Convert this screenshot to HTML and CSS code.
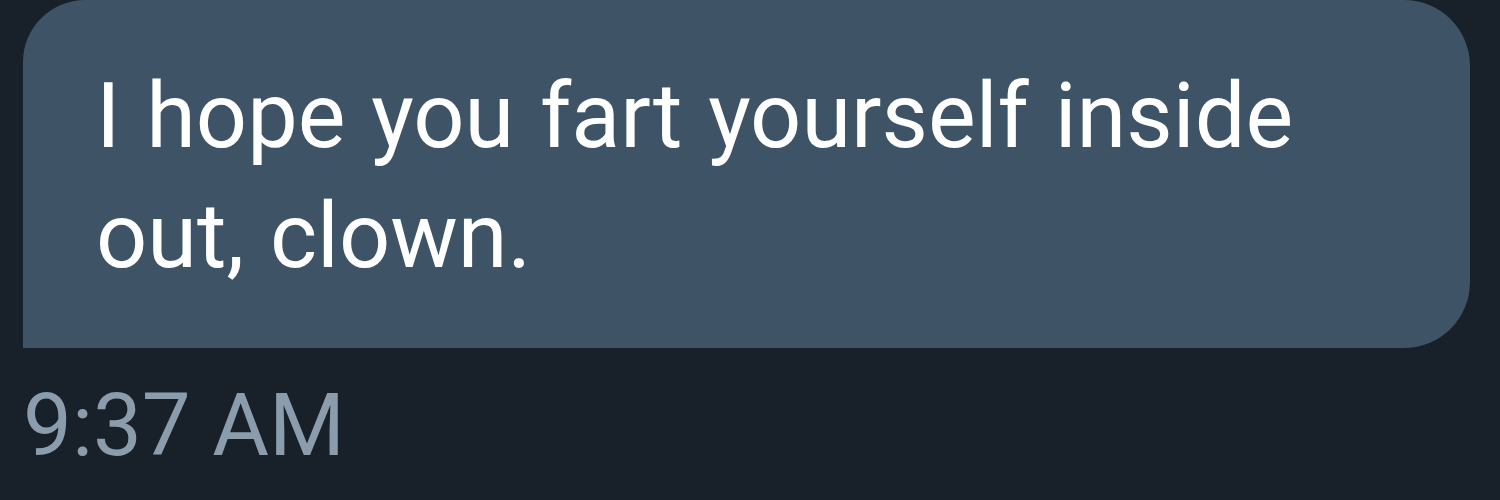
FILE: index.html
```html
<!DOCTYPE html>
<html>
<head>
<meta charset="utf-8">
<link rel="stylesheet" href="styles.css">
</head>
<body>
<div class="thread">
  <div class="bubble">
    <p class="message">I hope you fart yourself inside out, clown.</p>
  </div>
  <div class="time">9:37 AM</div>
</div>
</body>
</html>
```
FILE: styles.css
```css
html, body {
  margin: 0;
  padding: 0;
  background: #18202a;
  width: 1500px;
  height: 500px;
  overflow: hidden;
}
.thread {
  display: flex;
  flex-direction: column;
  font-family: Roboto, "Liberation Sans", sans-serif;
}
.bubble {
  margin: 0 30px 0 23px;
  background: #3e5366;
  border-radius: 62px 66px 66px 0;
  padding: 57px 60px 51px 73px;
}
.message {
  margin: 0;
  color: #ffffff;
  font-size: 90px;
  line-height: 120px;
  word-spacing: 3.5px;
  width: 1240px;
}
.time {
  margin-top: 27px;
  padding-left: 23px;
  color: #8b9dac;
  font-size: 87px;
  line-height: 100px;
}
```
